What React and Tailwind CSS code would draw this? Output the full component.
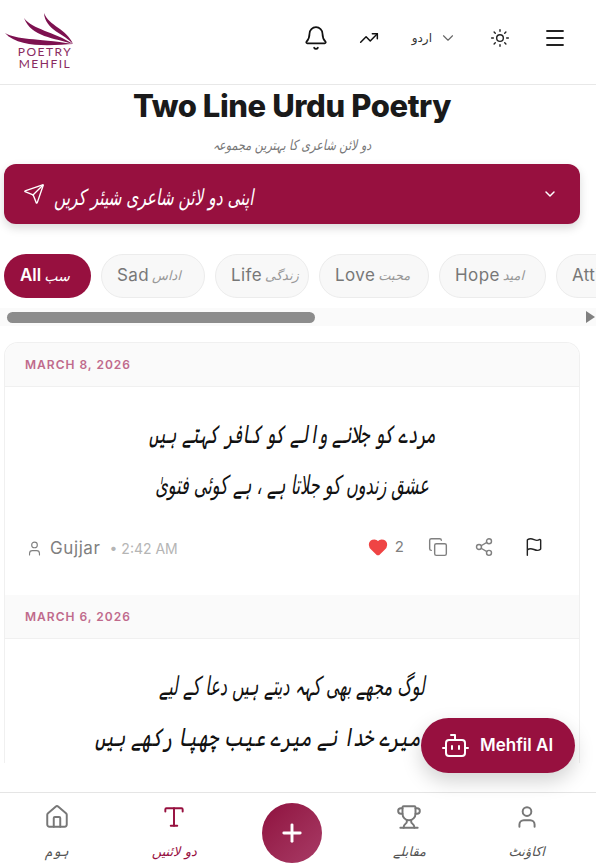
import React from 'react';
import { Bell, TrendingUp, ChevronDown, Sun, Menu, Send, User, Copy, Share2, Flag, Heart, House, Type, Plus, Trophy } from 'lucide-react';

const urdu = 'font-["DejaVu_Sans","Noto_Sans",sans-serif]';

const chips = [
  { en: 'Sad', ur: 'اداس', w: 'w-[104px]' },
  { en: 'Life', ur: 'زندگی', w: 'w-[94px]' },
  { en: 'Love', ur: 'محبت', w: 'w-[110px]' },
  { en: 'Hope', ur: 'امید', w: 'w-[107px]' },
  { en: 'Attitude', ur: 'انداز', w: 'w-[150px]' },
];

const posts = [
  {
    date: 'MARCH 8, 2026',
    lines: ['مردے کو جلانے والے کو کافر کہتے ہیں', 'عشق زندوں کو جلاتا ہے ، ہے کوئی فتویٰ'],
    author: 'Gujjar',
    time: '2:42 AM',
    likes: 2,
  },
  {
    date: 'MARCH 6, 2026',
    lines: ['لوگ مجھے بھی کہہ دیتے ہیں دعا کے لیے', 'میرے خدا نے میرے عیب چھپا رکھے ہیں'],
    shift: true,
  },
];

function Logo() {
  return (
    <div className="flex w-[70px] flex-col">
      <svg viewBox="0 0 70 33" className="h-[33px] w-[70px]" fill="#7d1150">
        <path d="M0 20 C12 27 30 25 68 31 C50 32 14 36 0 20Z" />
        <path d="M19 5 C28 17 48 18 68 31 C50 25 26 24 19 5Z" />
        <path d="M39 0 C44 13 62 16 68 31 C60 21 40 17 39 0Z" />
      </svg>
      <div className="w-[80px] text-center font-['Lato',sans-serif] text-[12px] leading-[12px] tracking-[1.5px] text-[#8a2a60]">
        <div>POETRY</div>
        <div>MEHFIL</div>
      </div>
    </div>
  );
}

function Post({ post }) {
  return (
    <article>
      <div className="flex h-[44px] items-center border-b border-[#f0f0f0] bg-[#fafafa] px-5 font-['Inter',sans-serif] text-[12px] font-semibold tracking-[1px] text-[#c06a8c]">
        {post.date}
      </div>
      <div dir="rtl" className={`${urdu} pt-[22px] text-center text-[26px] leading-[51px] whitespace-nowrap text-[#111] italic`}>
        {post.lines.map((l, i) => (
          <p key={l} className={post.shift && i === 1 ? 'scale-x-[0.68] pr-[99px]' : 'scale-x-[0.62]'}>{l}</p>
        ))}
      </div>
      {post.author && (
        <div className="flex h-[84px] items-start justify-between pr-[35px] pl-[21px] pt-[25px]">
          <div className="flex items-center font-['Inter',sans-serif] text-[#808080]">
            <User className="mr-[7px] h-[17px] w-[17px]" strokeWidth={1.6} />
            <span className="text-[17px] tracking-[0.6px]">{post.author}</span>
            <span className="ml-[9px] text-[14px] text-[#b5b5b5]">• {post.time}</span>
          </div>
          <div className="flex items-center text-[#808080]">
            <Heart className="h-[20px] w-[20px] fill-[#ef4444] text-[#ef4444]" />
            <span className="ml-[7px] font-['Inter',sans-serif] text-[15px]">{post.likes}</span>
            <Copy className="ml-[24px] h-[20px] w-[20px]" strokeWidth={1.7} />
            <Share2 className="ml-[26px] h-[20px] w-[20px]" strokeWidth={1.7} />
            <Flag className="ml-[30px] h-[20px] w-[20px] text-[#222]" strokeWidth={1.7} />
          </div>
        </div>
      )}
    </article>
  );
}

function NavItem({ icon: Icon, label, active }) {
  return (
    <div className={`flex w-[117.5px] flex-col items-center pt-[11px] ${active ? 'text-[#97103f]' : 'text-[#777]'}`}>
      <Icon className="h-[26px] w-[26px]" strokeWidth={1.8} />
      <span className={`${urdu} mt-[12px] text-[13px] italic ${active ? '' : 'text-[#555]'}`}>{label}</span>
    </div>
  );
}

export default function App() {
  return (
    <div className="relative flex h-[868px] w-[596px] flex-col overflow-hidden bg-white font-['Inter',sans-serif]">
      <header className="flex h-[85px] shrink-0 items-start border-b border-[#e8e8e8] pt-[13px] pr-[29px] pl-[5px]">
        <Logo />
        <div className="ml-auto flex h-[50px] items-center">
          <Bell className="h-[26px] w-[26px] text-[#111]" strokeWidth={1.6} />
          <TrendingUp className="ml-[30px] h-[20px] w-[20px] text-[#111]" strokeWidth={1.8} />
          <span className={`${urdu} ml-[33px] text-[12px] text-[#333]`}>اردو</span>
          <ChevronDown className="ml-[7px] h-[18px] w-[18px] text-[#666]" strokeWidth={1.5} />
          <Sun className="ml-[33px] h-[20px] w-[20px] text-[#222]" strokeWidth={1.7} />
          <Menu className="ml-[33px] h-[24px] w-[24px] text-[#222]" strokeWidth={1.8} />
        </div>
      </header>

      <main className="relative flex-1 overflow-hidden pr-[16px] pl-1">
        <h1 className="pt-[2px] text-center font-['Inter',sans-serif] text-[31px] leading-[38px] font-extrabold tracking-[-0.4px] text-[#1a1a1a]">
          Two Line Urdu Poetry
        </h1>
        <p dir="rtl" className={`${urdu} mt-[10px] scale-x-[0.8] text-center text-[14px] leading-[20px] text-[#777] italic`}>
          دو لائن شاعری کا بہترین مجموعہ
        </p>

        <div className="mt-[9px] flex h-[60px] items-center rounded-[12px] bg-[#97103f] pr-[22px] pl-[19px] text-white shadow-[0_4px_10px_rgba(0,0,0,0.15)]">
          <Send className="h-[22px] w-[22px]" strokeWidth={1.5} />
          <span dir="rtl" className={`${urdu} ml-[9px] inline-block origin-left scale-x-[0.7] pt-[6px] text-[22px] whitespace-nowrap italic`}>اپنی دو لائن شاعری شیئر کریں</span>
          <ChevronDown className="ml-auto h-[16px] w-[16px]" strokeWidth={2.2} />
        </div>

        <div className="mt-[30px] -mr-[16px] flex gap-[10px] overflow-hidden whitespace-nowrap">
          <div className="flex h-[44px] w-[87px] shrink-0 items-center gap-[3px] rounded-full bg-[#97103f] pl-[16px] text-[17px] font-semibold text-white">
            All <span className={`${urdu} text-[14px] font-normal italic`}>سب</span>
          </div>
          {chips.map((c) => (
            <div key={c.en} className={`flex h-[44px] ${c.w} shrink-0 items-center gap-[3px] rounded-full border border-[#ececec] bg-[#f8f8f8] pl-[15px] text-[17px] tracking-[0.4px] text-[#777]`}>
              {c.en} <span className={`${urdu} text-[13px] tracking-normal text-[#999] italic`}>{c.ur}</span>
            </div>
          ))}
        </div>

        <div className="-mr-[16px] -ml-1 mt-[10px] flex h-[18px] items-center bg-[#fafafa] pr-[1px] pl-[7px]">
          <div className="h-[11px] w-[308px] rounded-full bg-[#8c8c8c]" />
          <div className="ml-auto h-0 w-0 border-y-[6px] border-l-[9px] border-y-transparent border-l-[#808080]" />
        </div>

        <section className="mt-[16px] overflow-hidden rounded-t-[14px] border-x border-t border-[#f0f0f0]">
          {posts.map((p) => (
            <Post key={p.date} post={p} />
          ))}
        </section>
      </main>

      <div className="absolute top-[718px] left-[421px] flex h-[55px] w-[154px] items-center gap-[11px] rounded-full bg-[#97103f] pl-[21px] text-[17px] font-semibold text-white shadow-[0_8px_20px_rgba(0,0,0,0.18)]">
        <svg viewBox="0 0 27 26" className="h-[26px] w-[27px]" fill="none" stroke="currentColor" strokeWidth="2" strokeLinecap="round" strokeLinejoin="round">
          <path d="M13 7V2H9" />
          <rect x="4" y="7" width="19" height="16" rx="3" />
          <path d="M1 15h3M23 15h3M10 13v3M17 13v3" />
        </svg>
        Mehfil AI
      </div>

      <nav className="flex h-[76px] shrink-0 border-t border-[#e5e5e5] bg-white -ml-[2px]">
        <NavItem icon={House} label="ہوم" />
        <NavItem icon={Type} label="دو لائنیں" active />
        <div className="flex w-[117.5px] justify-center pt-[10px]">
          <div className="flex h-[60px] w-[60px] items-center justify-center rounded-full bg-gradient-to-br from-[#8f0f3f] to-[#a83a66] text-white">
            <Plus className="h-[28px] w-[28px]" strokeWidth={2.5} />
          </div>
        </div>
        <NavItem icon={Trophy} label="مقابلے" />
        <NavItem icon={User} label="اکاؤنٹ" />
      </nav>
    </div>
  );
}
